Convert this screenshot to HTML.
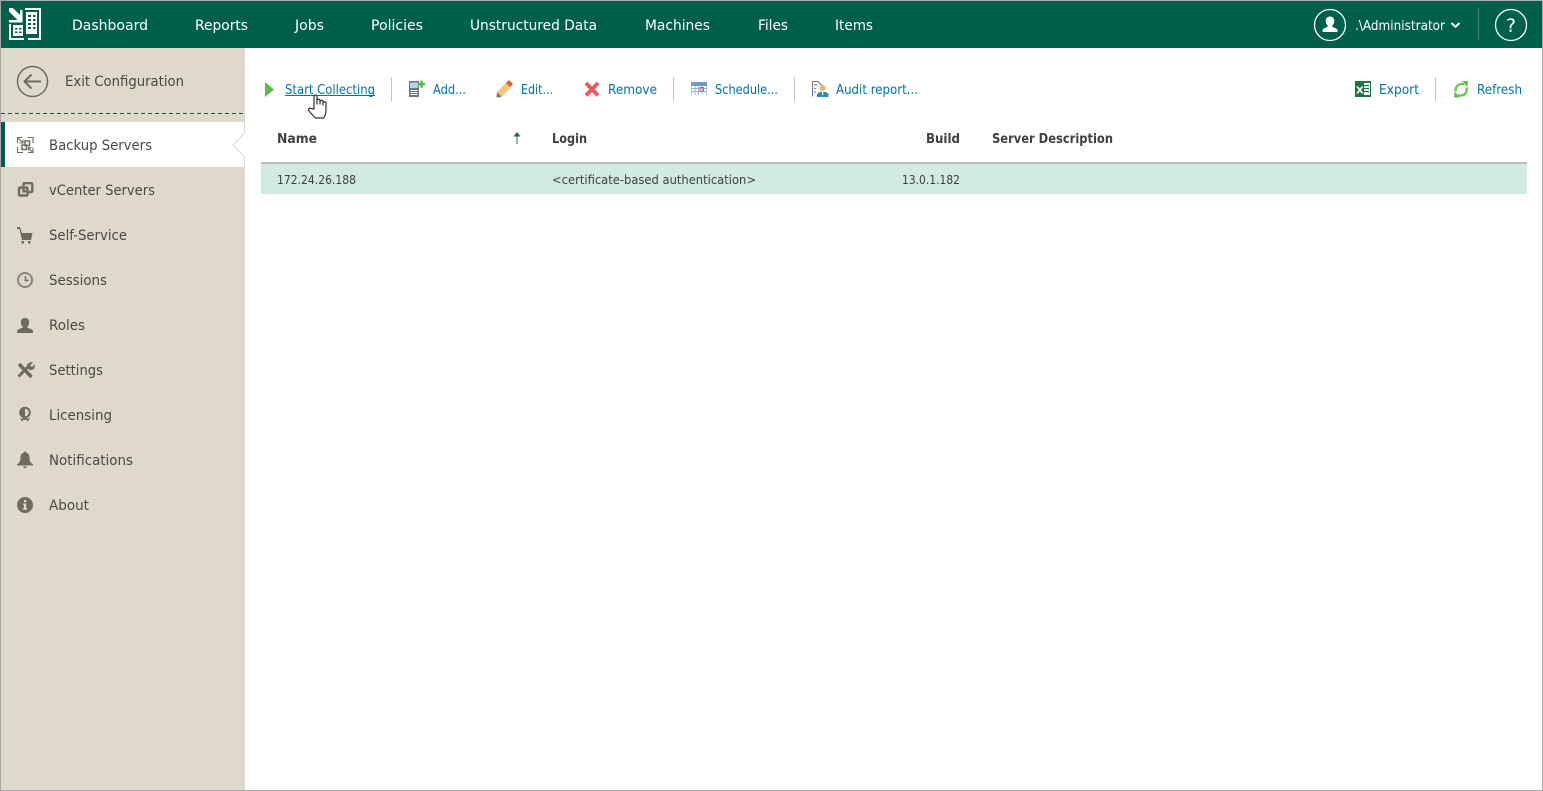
<!DOCTYPE html>
<html lang="en"><head><meta charset="utf-8"><title>Backup Servers</title>
<style>
html,body{margin:0;padding:0;background:#fff;overflow:hidden}
svg{display:block}
text{font-family:"DejaVu Sans","Liberation Sans",sans-serif;font-size:13.5px}
.n{fill:#fff;font-size:14.5px}
.s{fill:#4a4843;font-size:14px}
.t{fill:#0072a6;font-size:13px}
.h{fill:#404040;font-size:13px;font-weight:bold}
.r{fill:#404040;font-size:12.5px}
</style></head><body>
<svg width="1543" height="791" viewBox="0 0 1543 791" xmlns="http://www.w3.org/2000/svg">
<rect width="1543" height="791" fill="#fff"/>
<rect x="1" y="1" width="1541" height="47" fill="#005f4b"/>
<rect x="1" y="48" width="244" height="742" fill="#dfd9cc"/>
<rect x="0" y="0" width="1543" height="1" fill="#a8a8a8"/>
<rect x="0" y="0" width="1" height="791" fill="#a8a8a8"/>
<rect x="1542" y="0" width="1" height="791" fill="#a8a8a8"/>
<rect x="0" y="790" width="1543" height="1" fill="#a8a8a8"/>

<!-- logo -->
<g fill="#fff">
<path d="M9 8h4l7 7v-5h2.500v12.500h-13.500v-2.500h8.500l-8.500-8.500z"/>
<path d="M25 8h16v32h-13v-2h11v-28h-14z"/>
<path d="M9 24h2v14h13v2h-15z"/>
<path fill-rule="evenodd" d="M26 12h11v22h-11z M28 15v2h3v-2z M33 15v2h2.500v-2z M28 19v2h3v-2z M33 19v2h2.500v-2z M28 23v2h3v-2z M33 23v2h2.500v-2z M28 27v2h3v-2z M33 27v2h2.500v-2z"/>
<path fill-rule="evenodd" d="M13 25h10v11h-10z M15 28v1.500h2.500v-1.500z M19 28v1.500h2.500v-1.500z M15 31.500v1.500h2.500v-1.500z M19 31.500v1.500h2.500v-1.500z"/>
</g>

<!-- nav -->
<text class="n" x="72" y="30" textLength="76" lengthAdjust="spacingAndGlyphs">Dashboard</text>
<text class="n" x="195" y="30" textLength="53" lengthAdjust="spacingAndGlyphs">Reports</text>
<text class="n" x="295" y="30" textLength="29" lengthAdjust="spacingAndGlyphs">Jobs</text>
<text class="n" x="371" y="30" textLength="52" lengthAdjust="spacingAndGlyphs">Policies</text>
<text class="n" x="470" y="30" textLength="127" lengthAdjust="spacingAndGlyphs">Unstructured Data</text>
<text class="n" x="645" y="30" textLength="65" lengthAdjust="spacingAndGlyphs">Machines</text>
<text class="n" x="758" y="30" textLength="30" lengthAdjust="spacingAndGlyphs">Files</text>
<text class="n" x="835" y="30" textLength="38" lengthAdjust="spacingAndGlyphs">Items</text>

<!-- user -->
<circle cx="1330" cy="25" r="15.500" fill="none" stroke="#fff" stroke-width="1.300"/>
<path fill="#fff" d="M1330 16.500c-2.900 0-4.300 2.100-4.300 4.500 0 1.900.8 3.500 1.900 4.600v1.400c-2.100.8-5.100 1.500-5.100 3.500v1.500h15v-1.500c0-2-3-2.700-5.100-3.500v-1.400c1.100-1.100 1.900-2.700 1.900-4.600 0-2.400-1.400-4.500-4.300-4.500z"/>
<text x="1355" y="30" textLength="90" lengthAdjust="spacingAndGlyphs" fill="#fff" style="font-size:13px">.\Administrator</text>
<path d="M1451.500 23l4 3.800 4-3.800" fill="none" stroke="#fff" stroke-width="2"/>
<rect x="1478" y="8" width="1" height="32" fill="#3d8373"/>
<circle cx="1511" cy="25" r="15.500" fill="none" stroke="#fff" stroke-width="1.300"/>
<text x="1511" y="32" text-anchor="middle" fill="#fff" style="font-size:19px">?</text>

<!-- sidebar header -->
<circle cx="32.500" cy="81.500" r="15" fill="none" stroke="#6e6a60" stroke-width="1.500"/>
<path d="M41 81.500h-16M31.500 74.500l-7 7 7 7" fill="none" stroke="#6e6a60" stroke-width="2"/>
<text class="s" x="65" y="86" textLength="119" lengthAdjust="spacingAndGlyphs">Exit Configuration</text>
<line x1="1" y1="113.500" x2="245" y2="113.500" stroke="#1f5443" stroke-width="1" stroke-dasharray="4 3"/>

<!-- active row -->
<rect x="1" y="122" width="244" height="45" fill="#fff"/>
<rect x="1" y="122" width="4" height="45" fill="#005f4b"/>
<path d="M244.500 122v11l-11.500 12 11.500 12v10" fill="none" stroke="#dfd9cc" stroke-width="1"/>

<!-- sidebar icons -->
<g fill="none" stroke="#6e6a60" stroke-width="1.100">
<path d="M17.500 143v-5.500h5M27.500 137.500h5.500v5.500M17.500 147v5.500h5.500M33 147.500v5h-5"/>
<path d="M17.500 137.500l5.500 5.500M23 139.500v3.500h-3.500M33 152.500l-4.500-4.500M28.500 150.500v-3h3"/>
</g>
<g fill="none" stroke="#6e6a60" stroke-width="1.500">
<rect x="25" y="141" width="4.500" height="4.500"/><rect x="22" y="145" width="4.500" height="4.500"/>
</g>
<g fill="none" stroke="#6e6a60" stroke-width="2.400">
<path d="M23.500 186v-1.800a1 1 0 0 1 1-1h6.800a1 1 0 0 1 1 1v6.800a1 1 0 0 1-1 1h-2.500"/>
<path d="M19 188.500a1 1 0 0 1 1-1h6.500a1 1 0 0 1 1 1v6a1 1 0 0 1-1 1h-6.500a1 1 0 0 1-1-1z"/>
<path d="M23.500 187v4.300h4"/>
</g>
<path fill="#6e6a60" d="M17 227h3l2 6h10.500l-1.500 7h-9l-2.500-11h-2.500z"/>
<rect x="21.500" y="241" width="2.500" height="2.500" fill="#6e6a60"/><rect x="28" y="241" width="2.500" height="2.500" fill="#6e6a60"/>
<circle cx="25" cy="280" r="7" fill="none" stroke="#888581" stroke-width="2"/>
<path d="M25.500 276v4.500h3" fill="none" stroke="#6e6a60" stroke-width="1.500"/>
<path fill="#6e6a60" d="M25 318c-2.900 0-4.200 2-4.200 4.300 0 1.900.8 3.300 1.800 4.300v1.200c-2.100.8-5.600 1.500-5.600 3.700v1.500h16v-1.500c0-2.200-3.500-2.900-5.600-3.700v-1.200c1-1 1.800-2.400 1.800-4.300 0-2.300-1.300-4.300-4.200-4.300z"/>
<path d="M19 364l12.500 13" stroke="#6e6a60" stroke-width="3.500" fill="none"/>
<path d="M18.500 376.500l10-10" stroke="#6e6a60" stroke-width="3" fill="none"/>
<path d="M27 367c-.5-3 2.500-5.500 6-4.500l-2.800 2.800 1.800 1.800 2.700-2.700c1 3.500-1.700 6.300-5 5.600z" fill="#6e6a60"/>
<circle cx="25" cy="412.500" r="4.800" fill="none" stroke="#6e6a60" stroke-width="2"/>
<path fill="#6e6a60" d="M25 408v9a4.500 4.500 0 0 1 0-9zM20 418l3.500 1-1.300 3zM30 418l-3.500 1 1.300 3zM23 417h4v3h-4z"/>
<path fill="#6e6a60" d="M25 451.500c-.9 0-1.400.6-1.400 1.400-2.200.6-3.100 2.300-3.100 4.600 0 3-.6 5-3.500 7v1h16v-1c-2.900-2-3.500-4-3.500-7 0-2.300-.9-4-3.100-4.600 0-.8-.5-1.400-1.400-1.400zM23.300 466.500h3.400a1.700 1.700 0 0 1-3.400 0z"/>
<circle cx="25" cy="505" r="8" fill="#6e6a60"/>
<path fill="#dfd9cc" d="M24 500h2.200v2.200h-2.200zM23.200 503.500h3v5h1v1.200h-4.400v-1.200h1v-3.800h-.6z"/>

<!-- sidebar text -->
<text class="s" x="49" y="150" textLength="103" lengthAdjust="spacingAndGlyphs">Backup Servers</text>
<text class="s" x="49" y="195" textLength="106" lengthAdjust="spacingAndGlyphs">vCenter Servers</text>
<text class="s" x="49" y="240" textLength="78" lengthAdjust="spacingAndGlyphs">Self-Service</text>
<text class="s" x="49" y="285" textLength="58" lengthAdjust="spacingAndGlyphs">Sessions</text>
<text class="s" x="49" y="330" textLength="36" lengthAdjust="spacingAndGlyphs">Roles</text>
<text class="s" x="49" y="375" textLength="54" lengthAdjust="spacingAndGlyphs">Settings</text>
<text class="s" x="49" y="420" textLength="63" lengthAdjust="spacingAndGlyphs">Licensing</text>
<text class="s" x="49" y="465" textLength="84" lengthAdjust="spacingAndGlyphs">Notifications</text>
<text class="s" x="49" y="510" textLength="40" lengthAdjust="spacingAndGlyphs">About</text>

<!-- toolbar separators -->
<g fill="#c4c4c4">
<rect x="391" y="77" width="1" height="24"/><rect x="673" y="77" width="1" height="24"/>
<rect x="794" y="77" width="1" height="24"/><rect x="1435" y="77" width="1" height="24"/>
</g>

<!-- toolbar icons -->
<path fill="#5cb947" d="M265 82l9 7.500-9 7.500z"/>
<rect x="409" y="81" width="10" height="16" fill="#747474"/>
<rect x="410" y="82.500" width="8" height="5.500" fill="#b3d1ec"/>
<path d="M410.500 90.500h7M410.500 92.500h7M410.500 94.500h7" stroke="#fff" stroke-width=".9"/>
<path fill="#55b848" d="M418 83h2.300v-2.500h2.400v2.500h2.300v2.400h-2.300v2.500h-2.400v-2.500h-2.300z"/>
<path fill="#efc877" d="M497 92l9-9 5 4.500-9.500 9.500z"/>
<path fill="#d9603f" d="M506 83l3-3 4 4-3 3z"/>
<path fill="#777" d="M497 92l-.5 5.500 5-.5z"/>
<path d="M586 83l12 12.500M598 83l-12 12.500" stroke="#e85a5e" stroke-width="4"/>
<rect x="691" y="82" width="16" height="13" fill="#6f9bcb"/>
<rect x="691.500" y="86" width="15" height="9" fill="#fff"/>
<path d="M691 88.500h16M691 91.500h16M695 86v9M698.500 86v9M702 86v9" stroke="#8fb2d9" stroke-width=".9"/>
<rect x="700" y="87.500" width="3.500" height="3.500" fill="none" stroke="#e0584a" stroke-width="1"/>
<path fill="none" stroke="#777" stroke-width="1" d="M812.500 96.500v-15h5.500l3 3v2"/>
<path d="M814 85h3M814 88.500h2M814 92h2" stroke="#5aa0dc" stroke-width="1.300"/>
<circle cx="822.700" cy="88" r="3" fill="#eab95e"/>
<path fill="#2f86c6" d="M817 97v-2.500c0-1.500 2.500-2.800 5.700-2.800s5.800 1.300 5.800 2.800v2.500z"/>
<path d="M822.700 92v3" stroke="#fff" stroke-width="1.200"/>
<rect x="1355" y="81" width="16" height="16" fill="#1f7246"/>
<rect x="1364" y="83" width="6" height="12" fill="#fff"/>
<path d="M1364 85.500h5M1364 88.500h5M1364 91.500h5" stroke="#1f7246" stroke-width="1.200"/>
<text x="1356" y="93.500" fill="#fff" style="font-size:10px;font-weight:bold">X</text>
<g fill="none" stroke="#6cc65c" stroke-width="2.400">
<path d="M1455.800 91.500a6 6 0 0 1 8.200-7"/><path d="M1466.500 87.500a6 6 0 0 1-8.500 7.300"/>
</g>
<path fill="#5cbf4e" d="M1462 81l6 0-.5 6zM1460 97.500l-6 0 .5-6z"/>

<!-- toolbar text -->
<text class="t" x="285" y="94" textLength="90" lengthAdjust="spacingAndGlyphs">Start Collecting</text>
<rect x="285" y="95" width="90" height="1" fill="#0072a6"/>
<text class="t" x="433" y="94" textLength="33" lengthAdjust="spacingAndGlyphs">Add...</text>
<text class="t" x="521" y="94" textLength="32" lengthAdjust="spacingAndGlyphs">Edit...</text>
<text class="t" x="608" y="94" textLength="49" lengthAdjust="spacingAndGlyphs">Remove</text>
<text class="t" x="715" y="94" textLength="63" lengthAdjust="spacingAndGlyphs">Schedule...</text>
<text class="t" x="836" y="94" textLength="82" lengthAdjust="spacingAndGlyphs">Audit report...</text>
<text class="t" x="1379" y="94" textLength="40" lengthAdjust="spacingAndGlyphs">Export</text>
<text class="t" x="1477" y="94" textLength="45" lengthAdjust="spacingAndGlyphs">Refresh</text>

<!-- cursor -->
<path fill="#fff" stroke="#333" stroke-width="1.200" stroke-linejoin="round" d="M314 109V96.500c0-1.800 3-1.800 3 0V104 100.500c0-1.500 3-1.500 3 0V104 101.500c0-1.500 3-1.500 3 0V105 103c0-1.500 3-1.500 3 0V110c0 3-1 6-2.500 8h-8c-2-2-4-4-6.500-7-1.500-2 .5-3.500 2-2.500z"/>

<!-- table -->
<text class="h" x="277" y="143" textLength="40" lengthAdjust="spacingAndGlyphs">Name</text>
<path d="M517 144v-9" stroke="#1e6a52" stroke-width="1"/>
<path d="M513.500 136.500l3.500-4.500 3.500 4.500z" fill="#1e6a52"/>
<text class="h" x="552" y="143" textLength="35" lengthAdjust="spacingAndGlyphs">Login</text>
<text class="h" x="926" y="143" textLength="34" lengthAdjust="spacingAndGlyphs">Build</text>
<text class="h" x="992" y="143" textLength="121" lengthAdjust="spacingAndGlyphs">Server Description</text>
<rect x="261" y="162" width="1266" height="2" fill="#bcbcbc"/>
<rect x="261" y="164" width="1266" height="30" fill="#d1ebe0"/>
<text class="r" x="277" y="184" textLength="79" lengthAdjust="spacingAndGlyphs">172.24.26.188</text>
<text class="r" x="552" y="184" textLength="204" lengthAdjust="spacingAndGlyphs">&lt;certificate-based authentication&gt;</text>
<text class="r" x="902" y="184" textLength="58" lengthAdjust="spacingAndGlyphs">13.0.1.182</text>
</svg>
</body></html>
